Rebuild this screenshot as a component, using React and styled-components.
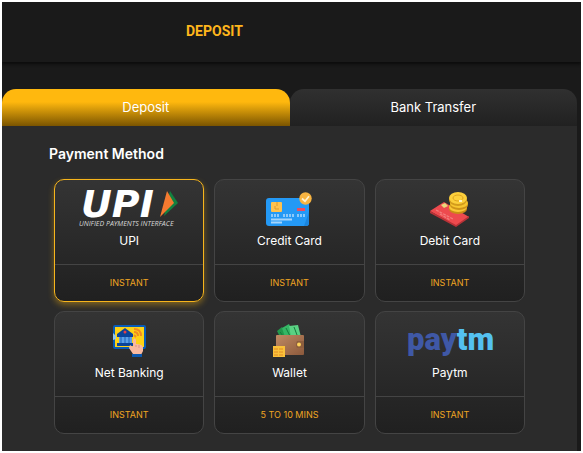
import React, {useState} from "react";
import styled, {createGlobalStyle} from "styled-components";


function UpiLogo() {
    return (
        <Logo width="100" height="38" viewBox="0 0 100 38" aria-hidden="true">
            <text x="2" y="27" fill="#fff" fontFamily="DejaVu Sans, sans-serif" fontSize="38" fontWeight="700" fontStyle="italic">UPI</text>
            <path d="M91 1 L99 13 L85 26Z" fill="#12803f" />
            <path d="M88 1 L95 13 L81 27Z" fill="#f47a30" />
            <text x="0" y="36" fill="#d8d8d8" fontFamily="Open Sans, sans-serif" fontSize="7" fontStyle="italic">UNIFIED PAYMENTS INTERFACE</text>
        </Logo>
    );
}

function CreditIcon() {
    return (
        <svg width="46" height="35" viewBox="0 0 46 35" aria-hidden="true">
            <rect x="0" y="6" width="43" height="28" rx="3" fill="#2499f5" />
            <path d="M38 34 L43 20 V31 Q43 34 40 34Z" fill="#1b85de" />
            <rect x="5" y="10" width="11" height="10" rx="1" fill="#ffc24f" />
            <path d="M11 10v4M9 14v3h4" stroke="#dc9b2d" fill="none" />
            <rect x="31" y="16" width="8" height="3" fill="#f04b5e" />
            <path d="M5 23.500h8M17 23.500h11M31 23.500h9" stroke="#8cc9fa" strokeWidth="3" strokeDasharray="2 1" />
            <path d="M5 27.500h21M5 30.500h11" stroke="#a5d5fb" strokeWidth="2" />
            <circle cx="39.500" cy="6.500" r="6.200" fill="#f8b441" />
            <path d="M36 6.500l3 2.700 4-5" stroke="#fff2cf" strokeWidth="1.700" fill="none" />
        </svg>
    );
}

function DebitIcon() {
    return (
        <svg width="40" height="35" viewBox="0 0 40 35" aria-hidden="true">
            <path d="M0 19 L14 10 39 25 26 34Z" fill="#ed4a4e" />
            <path d="M0 19v2l26 14 13-9v-2L26 33Z" fill="#b83237" />
            <path d="M11 13l4-2 3 3-4 2Z" fill="#e9d77a" />
            <path d="M6 18l17 9M10 22l10 6" stroke="#f27c7c" strokeWidth="1.300" strokeDasharray="3 1" />
            <ellipse cx="28" cy="17" rx="9" ry="5" fill="#c98e16" />
            <ellipse cx="28" cy="15" rx="9" ry="5" fill="#f9c735" />
            <ellipse cx="29" cy="13" rx="9" ry="5" fill="#cf9419" />
            <ellipse cx="29" cy="11" rx="9" ry="5" fill="#f8c62f" />
            <ellipse cx="28" cy="8" rx="9" ry="6" fill="#d39b1c" />
            <ellipse cx="28" cy="6" rx="9" ry="6" fill="#fccf3b" />
            <ellipse cx="28" cy="6" rx="5" ry="3" fill="none" stroke="#dea41f" />
            <path d="M29 9h3" stroke="#fff3bd" strokeWidth="2" />
        </svg>
    );
}

function BankIcon() {
    return (
        <svg width="33" height="33" viewBox="0 0 33 33" aria-hidden="true">
            <rect x="1" y="1" width="31" height="22" rx="1" fill="#fdd116" stroke="#075bb8" strokeWidth="2" />
            <path d="M0 8l3 3v3l-3 1Z" fill="#8cc6f4" />
            <path d="M12 3l8 6v3H4V9Z" fill="#0a4499" />
            <circle cx="12" cy="7" r="1.500" fill="#e83d44" />
            <path d="M6 12h13v7H6Z" fill="#5b9fe6" />
            <path d="M8 12v6M12 12v6M16 12v6" stroke="#1b61b8" />
            <path d="M4 18h16v3H4Z" fill="#0a4499" />
            <path d="M21 4q7 0 7 7M21 7q4 0 4 4M21 10l2 2" stroke="#f08a24" strokeWidth="2" fill="none" />
            <path d="M20 29l-4-6 1-3 3 2v-7q2-3 3 0v4q6 0 7 3v4l-2 4Z" fill="#f8b9a0" />
            <path d="M23 20v2M26 20v3" stroke="#dd9580" />
            <path d="M19 29h10v3H19Z" fill="#0b57ad" />
        </svg>
    );
}

function WalletIcon() {
    return (
        <svg width="32" height="34" viewBox="0 0 32 34" aria-hidden="true">
            <defs>
                <linearGradient id="leather" x1="0" y1="0" x2="1" y2="1">
                    <stop offset="0" stopColor="#c08a63" />
                    <stop offset="1" stopColor="#8b593c" />
                </linearGradient>
            </defs>
            <path d="M4 7l5-4 5 10H7Z" fill="#23984c" />
            <path d="M9 4l7-4 6 13H12Z" fill="#35b765" />
            <path d="M16 2l9-1 3 12H18Z" fill="#5ad183" />
            <path d="M7 8l3 4M13 4l4 8M21 3l3 8" stroke="#167a3c" />
            <rect x="3" y="11" width="28" height="20" rx="1" fill="url(#leather)" />
            <path d="M24 17h7v7h-7q-2-3 0-7Z" fill="#8d5e3e" />
            <circle cx="26" cy="20.500" r="2" fill="#ffd35c" />
            <rect x="0" y="22" width="12" height="11" fill="#fac13a" />
            <path d="M1 25h10M1 28h10M1 31h10" stroke="#e28a24" strokeDasharray="4 1" />
        </svg>
    );
}

function PaytmLogo() {
    return (
        <Logo width="86" height="38" viewBox="0 0 86 38" aria-hidden="true">
            <text x="0" y="28" fontFamily="Roboto, sans-serif" fontSize="31" fontWeight="900">
                <tspan fill="#3f58a6">pay</tspan>
                <tspan fill="#54c1f0">tm</tspan>
            </text>
        </Logo>
    );
}

const methods = [
    {name: "UPI", time: "INSTANT", Icon: UpiLogo},
    {name: "Credit Card", time: "INSTANT", Icon: CreditIcon},
    {name: "Debit Card", time: "INSTANT", Icon: DebitIcon},
    {name: "Net Banking", time: "INSTANT", Icon: BankIcon},
    {name: "Wallet", time: "5 TO 10 MINS", Icon: WalletIcon},
    {name: "Paytm", time: "INSTANT", Icon: PaytmLogo},
];


function App() {
    const [tab, setTab] = useState("Deposit");
    const [method, setMethod] = useState("UPI");

    return (
        <Page>
            <GlobalStyle />
            <Header>
                <Title>DEPOSIT</Title>
            </Header>

            <Content>
                <Tabs role="tablist">
                    {["Deposit", "Bank Transfer"].map(name => (
                        <Tab
                            key={name}
                            type="button"
                            role="tab"
                            aria-selected={tab === name}
                            $active={tab === name}
                            onClick={() => setTab(name)}>
                            {name}
                        </Tab>
                    ))}
                </Tabs>

                <Panel>
                    <Subheader>Payment Method</Subheader>
                    <Methods>
                        {methods.map(({name, time, Icon}) => (
                            <Method
                                key={name}
                                type="button"
                                aria-pressed={method === name}
                                $active={method === name}
                                onClick={() => setMethod(name)}>
                                <MethodTop>
                                    <IconBox><Icon /></IconBox>
                                    <span>{name}</span>
                                </MethodTop>
                                <MethodTime>{time}</MethodTime>
                            </Method>
                        ))}
                    </Methods>
                </Panel>
            </Content>
        </Page>
    );
}


const GlobalStyle = createGlobalStyle`
    * {
        box-sizing: border-box;
    }
    body {
        margin: 0;
        background: #fff;
        font-family: Inter, sans-serif;
    }
    button {
        font-family: inherit;
        cursor: pointer;
    }
`
const Page = styled.main`
    margin: 2px;
    overflow: hidden;
    background: #1a1a1a;
`
const Header = styled.header`
    display: flex;
    align-items: center;
    height: 60px;
    padding: 0 0 2px 184px;
    box-shadow: 0 2px 3px #0b0b0b;
`
const Title = styled.h1`
    margin: 0;
    color: #ffb61c;
    font: 700 14px/20px Roboto, sans-serif;
`
const Content = styled.div`
    padding: 27px 4px 0 0;
`
const Tabs = styled.div`
    display: grid;
    grid-template-columns: 1fr 1fr;
`
const Tab = styled.button`
    height: 37px;
    padding: 0 0 2px;
    border: 0;
    border-radius: 14px 14px 0 0;
    background: ${props => props.$active
        ? "linear-gradient(#ffb80e 35%, #7a5400)"
        : "linear-gradient(#303030, #212121)"};
    color: #fff;
    font-size: 13px;
`
const Panel = styled.section`
    padding: 18px 52px 17px;
    background: #2b2b2b;
`
const Subheader = styled.h2`
    margin: 0 0 15px -5px;
    color: #fff;
    font-size: 14px;
    font-weight: 600;
    line-height: 20px;
`
const Methods = styled.div`
    display: grid;
    grid-template-columns: repeat(3, 1fr);
    gap: 9px 10px;
`
const Method = styled.button`
    display: flex;
    flex-direction: column;
    padding: 0;
    border: 1px solid ${props => props.$active ? "#f7b51c" : "#444"};
    border-radius: 10px;
    background: linear-gradient(#343434, #202020);
    box-shadow: ${props => props.$active ? "0 3px 6px rgba(255, 184, 14, 0.4)" : "none"};
    color: #fff;
`
const MethodTop = styled.span`
    display: flex;
    flex-direction: column;
    align-items: center;
    width: 100%;
    height: 85px;
    padding-top: 10px;
    border-bottom: 1px solid #444;
    font-size: 12px;
    line-height: 16px;
`
const IconBox = styled.span`
    display: flex;
    align-items: center;
    justify-content: center;
    height: 38px;
    margin-bottom: 5px;
`
const Logo = styled.svg`
    overflow: visible;
`
const MethodTime = styled.span`
    width: 100%;
    color: #f0a522;
    font-size: 9px;
    line-height: 36px;
`

export default App;
